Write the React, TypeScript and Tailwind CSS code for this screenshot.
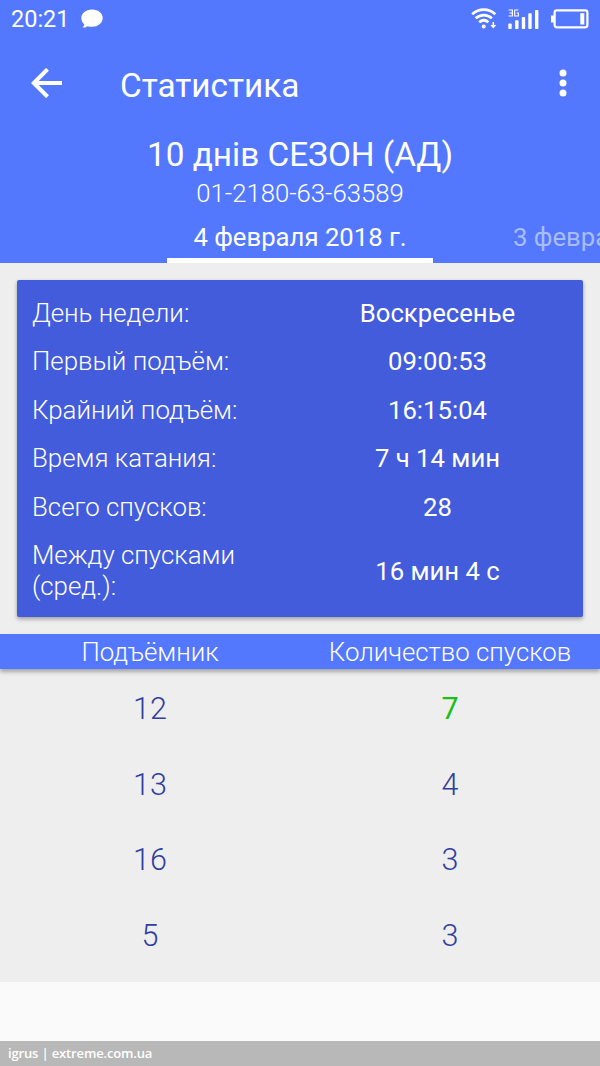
const rows = [
  { label: 'День недели:', value: 'Воскресенье' },
  { label: 'Первый подъём:', value: '09:00:53' },
  { label: 'Крайний подъём:', value: '16:15:04' },
  { label: 'Время катания:', value: '7 ч 14 мин' },
  { label: 'Всего спусков:', value: '28' },
  { label: 'Между спусками (сред.):', value: '16 мин 4 с' },
];

const lifts = [
  { lift: '12', count: '7', best: true },
  { lift: '13', count: '4', best: false },
  { lift: '16', count: '3', best: false },
  { lift: '5', count: '3', best: false },
];

function StatusBar() {
  return (
    <div className="flex h-[38px] shrink-0 items-center pl-[11px] pr-[11px]">
      <span className="w-[58px] text-[23.500px] leading-[36px]">20:21</span>
      <svg className="ml-[12px]" width="22" height="20" viewBox="0 0 22 20" fill="currentColor">
        <path d="M11 .5C5 .5.3 4.300.3 9c0 2.600 1 4.700 3 6.300-.1 1.400-.8 2.500-1.900 3.200 2.100.2 3.900-.3 5.200-1.300 1.400.4 2.800.6 4.400.6 6 0 10.700-3.800 10.700-8.800S17 .5 11 .5z" />
      </svg>
      <div className="flex-1" />
      <svg width="26" height="22" viewBox="0 0 26 22" fill="none" stroke="currentColor" strokeWidth="2.800">
        <path d="M1.200 6.200C8 .2 17.500.2 24.300 6.200" />
        <path d="M4.700 10.300c4.900-4.300 11.300-4.300 16.200 0" />
        <path d="M8.200 14.300c2.900-2.500 6.300-2.500 9.200 0" />
        <circle cx="12.700" cy="18.400" r="2" fill="currentColor" stroke="none" />
        <path d="M22.300 14v4" strokeWidth="1.600" />
        <path d="M19.300 17h6l-3 3.600z" fill="currentColor" stroke="none" />
      </svg>
      <svg className="ml-[11px]" width="32" height="22" viewBox="0 0 32 22" fill="currentColor">
        <path d="M.6 2H4.400V8H.6M1.400 5H4.400M10.400 2H6.700V8H10.400V5H8.600" fill="none" stroke="currentColor" strokeWidth="1.100" />
        <rect x=".3" y="15.500" width="3.400" height="5.500" rx=".8" />
        <rect x="7.100" y="12.300" width="3.400" height="8.700" rx=".8" />
        <rect x="13.800" y="9" width="3.400" height="12" rx=".8" />
        <rect x="20.300" y="5.300" width="3.400" height="15.700" rx=".8" />
        <rect x="27" y="2" width="3.400" height="19" rx=".8" />
      </svg>
      <svg className="ml-[11px]" width="38" height="20" viewBox="0 0 38 20" fill="none">
        <rect x="3.600" y="1.300" width="32.800" height="17" rx="2.200" stroke="currentColor" strokeWidth="2.200" />
        <path d="M0 6.500h3v7H0z" fill="currentColor" />
        <rect x="29.300" y="4.200" width="4" height="11.300" fill="currentColor" />
      </svg>
    </div>
  );
}

function Toolbar() {
  return (
    <div className="flex h-[92px] shrink-0 items-center pl-[31px] pr-[32px]">
      <svg width="32" height="30" viewBox="0 0 32 30" fill="none" stroke="currentColor" strokeWidth="4" className="mb-[2px]">
        <path d="M31 15H3M16.500 1.300 2.800 15l13.700 13.700" />
      </svg>
      <h1 className="ml-[57px] flex-1 pt-[4px] text-[33.330px] leading-[40px]">Статистика</h1>
      <svg width="10" height="28" viewBox="0 0 10 28" fill="currentColor" className="mb-[2px]">
        <circle cx="5" cy="4" r="3.500" />
        <circle cx="5" cy="14" r="3.500" />
        <circle cx="5" cy="24" r="3.500" />
      </svg>
    </div>
  );
}

export default function App() {
  return (
    <div className="flex h-[1066px] w-[600px] flex-col overflow-hidden bg-[#fafafa] font-['Roboto',sans-serif] text-white">
      <header className="flex h-[263px] shrink-0 flex-col bg-[#5478fd]">
        <StatusBar />
        <Toolbar />
        <div className="flex h-[79px] shrink-0 flex-col items-center pt-[5px]">
          <h2 className="text-[33.330px] leading-[40px]">10 днів СЕЗОН (АД)</h2>
          <p className="text-[25.700px] font-light leading-[37px]">01-2180-63-63589</p>
        </div>
        <nav className="flex h-[54px] shrink-0 overflow-hidden pl-[167px]">
          <div className="flex h-full w-[266px] shrink-0 justify-center border-b-[5px] border-white pt-[9px]">
            <span className="whitespace-nowrap text-[25.700px] leading-[38px]">4 февраля 2018 г.</span>
          </div>
          <div className="ml-[80px] shrink-0 whitespace-nowrap pt-[9px] text-[25.700px] leading-[38px] text-[#a8bdfe]">3 февраля 2018 г.</div>
        </nav>
      </header>

      <main className="flex h-[719px] shrink-0 flex-col bg-[#eeeeee] pt-[17px]">
        <section className="mx-[17px] flex h-[337px] shrink-0 flex-col rounded-[2px] bg-[#435cdb] pl-[15px] pt-[9.400px] text-[25.700px] leading-[31.300px] shadow-[0_2px_4px_rgba(0,0,0,0.35)]">
          {rows.map((row) => (
            <div key={row.label} className="flex items-center py-[8.550px]">
              <span className="w-[260px] pr-[20px] text-[25.850px] font-light">{row.label}</span>
              <span className="w-[291px] text-center">{row.value}</span>
            </div>
          ))}
        </section>

        <div className="mt-[17px] flex h-[35px] shrink-0 items-center bg-[#5478fd] pt-[2px] text-center text-[25.800px] font-light leading-[35px] shadow-[0_3px_4px_rgba(0,0,0,0.3)]">
          <span className="w-1/2">Подъёмник</span>
          <span className="w-1/2">Количество спусков</span>
        </div>

        <ul className="flex flex-col pt-[2px] text-center text-[30.500px] text-[#303f9f]">
          {lifts.map((item) => (
            <li key={item.lift} className="flex h-[75.600px] items-center">
              <span className="w-1/2 font-light">{item.lift}</span>
              <span className={item.best ? 'w-1/2 text-[#18c018]' : 'w-1/2 font-light'}>{item.count}</span>
            </li>
          ))}
        </ul>
      </main>

      <div className="flex-1" />
      <footer className="flex h-[25px] shrink-0 items-center bg-[#b8b8b8] pl-[8px] font-['Open_Sans',sans-serif] text-[13px] font-semibold tracking-[-0.15px]">
        igrus | extreme.com.ua
      </footer>
    </div>
  );
}
